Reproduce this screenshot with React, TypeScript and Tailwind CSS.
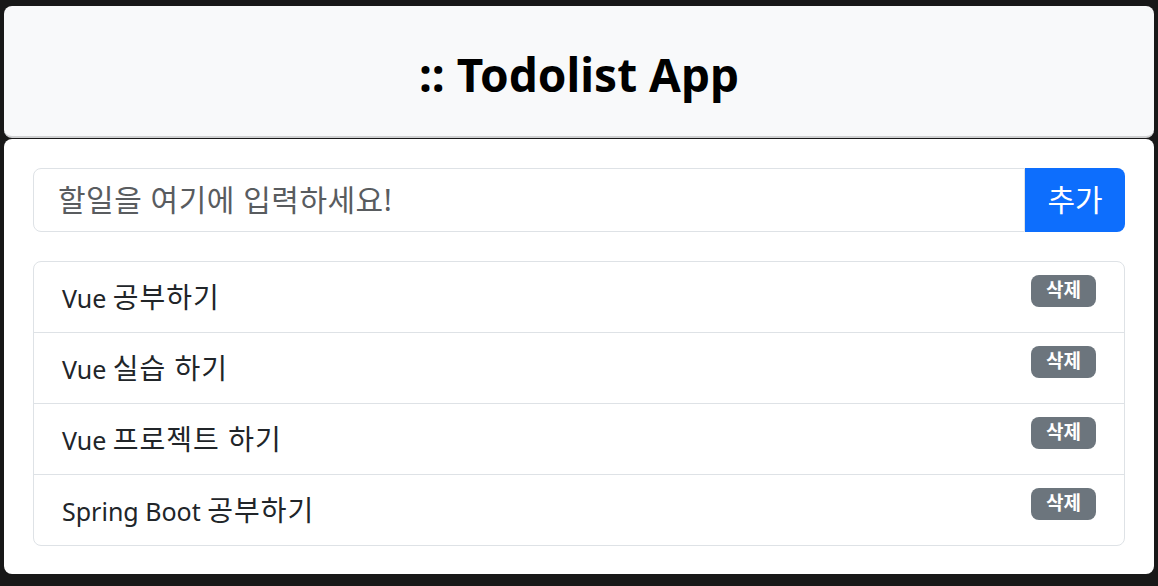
import React from "react";

const todos = ["Vue 공부하기", "Vue 실습 하기", "Vue 프로젝트 하기", "Spring Boot 공부하기"];

function Kr({ text }: { text: string }) {
  const parts = text.split(/([가-힣][가-힣 ]*[가-힣]|[가-힣])/g).filter((p) => p.length > 0);
  return (
    <>
      {parts.map((p, i) =>
        /[가-힣]/.test(p) ? (
          <span key={i} className="text-[28px] tracking-[1px]">
            {p}
          </span>
        ) : (
          <span key={i}>{p}</span>
        )
      )}
    </>
  );
}

export default function App() {
  return (
    <div
      className="min-h-[586px] bg-[#181818] px-[4px] pt-[6px] pb-[11px]"
      style={{ fontFamily: '"Noto Sans", "Noto Sans CJK KR", sans-serif' }}
    >
      <div className="flex h-[132px] items-center justify-center rounded-[8px] border-b-2 border-[#cfd0d1] bg-[#f8f9fa]">
        <h1 className="mt-[6px] text-[46px] font-bold leading-none text-black">:: Todolist App</h1>
      </div>
      <div className="mt-[1px] rounded-[8px] bg-white px-[29px] pt-[29px] pb-[28px]">
        <div className="flex h-[64px]">
          <div className="flex flex-1 items-center rounded-l-[8px] border border-[#dee2e6] px-[24px]">
            <span className="text-[30px] leading-none tracking-[0.5px] text-[#595c5f]">할일을 여기에 입력하세요!</span>
          </div>
          <div className="flex w-[100px] items-center justify-center rounded-r-[8px] bg-[#0d6efd] text-[30px] leading-none text-white">
            추가
          </div>
        </div>
        <div className="mt-[29px] rounded-[8px] border border-[#dee2e6]">
          {todos.map((t, i) => (
            <div
              key={t}
              className={
                i > 0
                  ? "flex h-[71px] items-center justify-between border-t border-[#dee2e6] px-[28px]"
                  : "flex h-[70px] items-center justify-between px-[28px]"
              }
            >
              <span className="text-[25px] leading-none text-[#212529]">
                <Kr text={t} />
              </span>
              <span className="mb-[13px] flex h-[32px] w-[65px] items-center justify-center rounded-[8px] bg-[#6c757d] text-[19px] font-bold text-white">
                삭제
              </span>
            </div>
          ))}
        </div>
      </div>
    </div>
  );
}
